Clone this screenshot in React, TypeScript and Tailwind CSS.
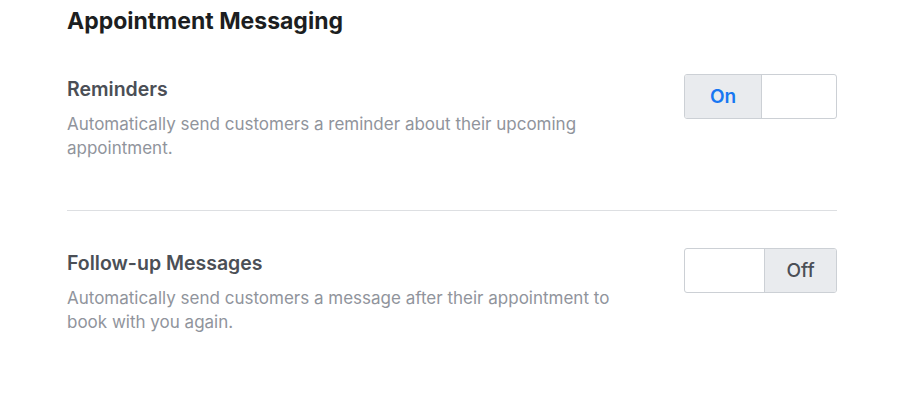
import { FC } from "react";

type ToggleProps = { on: boolean };

const Toggle: FC<ToggleProps> = ({ on }) => {
	return (
		<div className="flex h-[45px] w-[153px] shrink-0 overflow-hidden rounded-[3px] border border-[#ccd0d5] bg-white">
			{on ? (
				<>
					<div className="flex w-[77px] items-center justify-center border-r border-[#ccd0d5] bg-[#e9ebee] pt-px text-[19px] font-semibold text-[#1877f2]">
						On
					</div>
					<div className="flex-1" />
				</>
			) : (
				<>
					<div className="w-[79px]" />
					<div className="flex flex-1 items-center justify-center border-l border-[#ccd0d5] bg-[#e9ebee] pt-px text-[19px] font-medium text-[#4b4f56]">
						Off
					</div>
				</>
			)}
		</div>
	);
};

type RowProps = { title: string; description: string; on: boolean };

const SettingRow: FC<RowProps> = ({ title, description, on }) => {
	return (
		<div className="flex items-start justify-between">
			<div className="w-[560px] pt-[3px]">
				<h3 className="text-[19.5px] leading-[24px] font-semibold text-[#4b4f56]">{title}</h3>
				<p className="mt-[11px] text-[17px] leading-[24px] text-[#90949c]">{description}</p>
			</div>
			<Toggle on={on} />
		</div>
	);
};

const App: FC = () => {
	return (
		<main className="min-h-screen bg-white font-['Inter',sans-serif]">
			<div className="w-[837px] pl-[67px] pt-[7px]">
				<h2 className="text-[23px] leading-[28px] font-bold text-[#1c1e21]">Appointment Messaging</h2>

				<div className="mt-[39px]">
					<SettingRow
						title="Reminders"
						description="Automatically send customers a reminder about their upcoming appointment."
						on
					/>
				</div>

				<div className="mt-[50px] h-px bg-[#dddfe2]" />

				<div className="mt-[37px]">
					<SettingRow
						title="Follow-up Messages"
						description="Automatically send customers a message after their appointment to book with you again."
						on={false}
					/>
				</div>
			</div>
		</main>
	);
};

export default App;
